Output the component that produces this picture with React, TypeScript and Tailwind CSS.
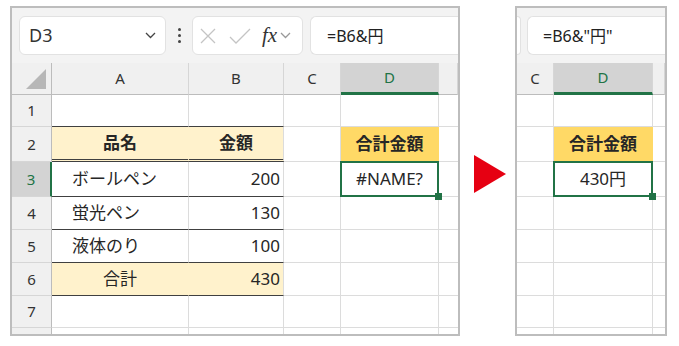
import React from 'react'

const FONT = { fontFamily: '"Noto Sans", "Noto Sans CJK JP", sans-serif' }

type Cell = {
  w: number
  text?: string
  align?: 'left' | 'center' | 'right'
  bold?: boolean
  bg?: string
  bottom?: string
  right?: string
  selected?: boolean
}

function Chevron({ className }: { className?: string }) {
  return (
    <svg width="11" height="7" viewBox="0 0 11 7" className={className}>
      <path d="M1 1l4.5 4.5L10 1" fill="none" stroke="currentColor" strokeWidth="1.3" />
    </svg>
  )
}

function Row({ h, cells, header }: { h: number; cells: Cell[]; header?: { text: string; active?: boolean } }) {
  return (
    <div className="flex shrink-0" style={{ height: h }}>
      {header && (
        <div
          className={`flex w-[40px] shrink-0 items-center justify-center border-b border-b-[#d6d6d6] text-[15px] ${
            header.active
              ? 'border-r-2 border-r-[#217346] bg-[#d3d3d3] text-[#217346]'
              : 'border-r border-r-[#bcbcbc] bg-[#f0f0f0] text-[#333]'
          }`}
        >
          {header.text}
        </div>
      )}
      {cells.map((c, i) => (
        <div
          key={i}
          className={`relative flex shrink-0 items-center text-[17px] text-[#262626] ${c.bg ?? 'bg-white'} ${
            c.bottom ?? 'border-b border-b-[#dcdcdc]'
          } ${c.right ?? 'border-r border-r-[#dcdcdc]'} ${
            c.align === 'right' ? 'justify-end pr-[3px]' : c.align === 'center' ? 'justify-center' : 'pl-[20px]'
          } ${c.bold ? 'font-bold' : ''} ${c.selected ? 'z-10' : ''}`}
          style={{ width: c.w }}
        >
          {c.text}
          {c.selected && (
            <div className="absolute -top-px -left-px -right-[1px] -bottom-px border-2 border-[#217346]">
              <div className="absolute -right-[5px] -bottom-[5px] h-[7px] w-[7px] bg-[#217346]" />
            </div>
          )}
        </div>
      ))}
    </div>
  )
}

function ColHeader({ letters, widths, active, corner }: { letters: string[]; widths: number[]; active: number; corner?: boolean }) {
  return (
    <div className="flex h-[32px] shrink-0">
      {corner && (
        <div className="relative w-[40px] shrink-0 border-r border-b border-[#bcbcbc] bg-[#f0f0f0]">
          <svg width="20" height="20" className="absolute right-[5px] bottom-[5px]">
            <polygon points="20,0 20,20 0,20" fill="#b7b7b7" />
          </svg>
        </div>
      )}
      {letters.map((l, i) => (
        <div
          key={i}
          className={`flex shrink-0 items-center justify-center border-r border-r-[#d6d6d6] text-[15px] ${
            i === active
              ? 'border-b-[3px] border-b-[#217346] bg-[#d3d3d3] text-[#217346]'
              : 'border-b border-b-[#bcbcbc] bg-[#f0f0f0] text-[#333]'
          }`}
          style={{ width: widths[i] }}
        >
          {l}
        </div>
      ))}
    </div>
  )
}

const dark = 'border-b border-b-[#404040]'
const dbl = 'border-b-[3px] border-double border-b-[#404040]'
const creamR = 'border-r border-r-[#fff2cc]'
const goldR = 'border-r border-r-[#ffd966]'

function LeftSheet() {
  const W = [137, 95, 57, 98, 19]
  const blank = (w: number): Cell => ({ w })
  return (
    <div className="flex h-[330px] w-[450px] shrink-0 flex-col overflow-hidden border-2 border-[#bdbdbd] bg-white">
      <div className="flex h-[55px] shrink-0 items-center bg-[#f3f3f3] pl-[7px]">
        <div className="flex h-[39px] w-[147px] items-center justify-between rounded-md border border-[#e2e2e2] bg-white pr-[9px] pl-[9px] text-[18px] text-[#333]">
          D3
          <Chevron className="text-[#444]" />
        </div>
        <div className="ml-[12px] flex flex-col gap-[3px]">
          <span className="h-[3px] w-[3px] rounded-full bg-[#444]" />
          <span className="h-[3px] w-[3px] rounded-full bg-[#444]" />
          <span className="h-[3px] w-[3px] rounded-full bg-[#444]" />
        </div>
        <div className="ml-[11px] flex h-[39px] w-[111px] items-center rounded-md border border-[#e2e2e2] bg-white pl-[7px]">
          <svg width="16" height="16" viewBox="0 0 16 16">
            <path d="M1 1l14 14M15 1L1 15" stroke="#c4c4c4" strokeWidth="1.3" />
          </svg>
          <svg width="22" height="16" viewBox="0 0 22 16" className="ml-[13px]">
            <path d="M1 9l6 6L21 1" fill="none" stroke="#c4c4c4" strokeWidth="1.3" />
          </svg>
          <span
            className="ml-[11px] text-[21px] italic text-[#333]"
            style={{ fontFamily: '"Liberation Serif", serif' }}
          >
            fx
          </span>
          <Chevron className="ml-[3px] text-[#999]" />
        </div>
        <div className="ml-[7px] flex h-[39px] flex-1 items-center rounded-l-md border border-r-0 border-[#e2e2e2] bg-white pl-[16px] text-[16px] text-[#222]">
          =B6&amp;円
        </div>
      </div>
      <ColHeader corner letters={['A', 'B', 'C', 'D', '']} widths={W} active={3} />
      <Row
        h={32}
        header={{ text: '1' }}
        cells={[{ w: 137, bottom: dark }, { w: 95, bottom: dark }, blank(57), blank(98), blank(19)]}
      />
      <Row
        h={35}
        header={{ text: '2' }}
        cells={[
          { w: 137, text: '品名', align: 'center', bold: true, bg: 'bg-[#fff2cc]', bottom: dbl, right: creamR },
          { w: 95, text: '金額', align: 'center', bold: true, bg: 'bg-[#fff2cc]', bottom: dbl },
          blank(57),
          { w: 98, text: '合計金額', align: 'center', bold: true, bg: 'bg-[#ffd966]', right: goldR },
          blank(19),
        ]}
      />
      <Row
        h={35}
        header={{ text: '3', active: true }}
        cells={[
          { w: 137, text: 'ボールペン', bottom: dark },
          { w: 95, text: '200', align: 'right', bottom: dark },
          blank(57),
          { w: 98, text: '#NAME?', align: 'center', selected: true },
          blank(19),
        ]}
      />
      <Row
        h={33}
        header={{ text: '4' }}
        cells={[
          { w: 137, text: '蛍光ペン', bottom: dark },
          { w: 95, text: '130', align: 'right', bottom: dark },
          blank(57),
          blank(98),
          blank(19),
        ]}
      />
      <Row
        h={33}
        header={{ text: '5' }}
        cells={[
          { w: 137, text: '液体のり', bottom: dark },
          { w: 95, text: '100', align: 'right', bottom: dark },
          blank(57),
          blank(98),
          blank(19),
        ]}
      />
      <Row
        h={33}
        header={{ text: '6' }}
        cells={[
          { w: 137, text: '合計', align: 'center', bg: 'bg-[#fff2cc]', bottom: dark, right: creamR },
          { w: 95, text: '430', align: 'right', bg: 'bg-[#fff2cc]', bottom: dark },
          blank(57),
          blank(98),
          blank(19),
        ]}
      />
      <Row h={32} header={{ text: '7' }} cells={[blank(137), blank(95), blank(57), blank(98), blank(19)]} />
      <Row h={8} header={{ text: '' }} cells={[blank(137), blank(95), blank(57), blank(98), blank(19)]} />
    </div>
  )
}

function RightSheet() {
  const W = [37, 99, 12]
  const blank = (w: number): Cell => ({ w })
  const plain = (h: number) => <Row h={h} cells={[blank(37), blank(99), blank(12)]} />
  return (
    <div className="flex h-[330px] w-[152px] shrink-0 flex-col overflow-hidden border-2 border-[#bdbdbd] bg-white">
      <div className="flex h-[55px] shrink-0 items-center bg-[#f3f3f3]">
        <div className="h-[39px] w-[4px] rounded-r-md border border-l-0 border-[#e2e2e2] bg-white" />
        <div className="ml-[6px] flex h-[39px] flex-1 items-center rounded-l-md border border-r-0 border-[#e2e2e2] bg-white pl-[15px] text-[16px] text-[#222]">
          =B6&amp;"円"
        </div>
      </div>
      <ColHeader letters={['C', 'D', '']} widths={W} active={1} />
      {plain(32)}
      <Row
        h={35}
        cells={[
          blank(37),
          { w: 99, text: '合計金額', align: 'center', bold: true, bg: 'bg-[#ffd966]', right: goldR },
          blank(12),
        ]}
      />
      <Row h={35} cells={[blank(37), { w: 99, text: '430円', align: 'center', selected: true }, blank(12)]} />
      {plain(33)}
      {plain(33)}
      {plain(33)}
      {plain(32)}
      {plain(8)}
    </div>
  )
}

export default function App() {
  return (
    <div className="flex h-[346px] w-[679px] items-start bg-white pt-[6px] pl-[10px]" style={FONT}>
      <LeftSheet />
      <div className="mt-[149px] ml-[14px] w-[41px] shrink-0">
        <svg width="32" height="38" viewBox="0 0 32 38">
          <polygon points="0,0 32,19 0,38" fill="#e60012" />
        </svg>
      </div>
      <RightSheet />
    </div>
  )
}
